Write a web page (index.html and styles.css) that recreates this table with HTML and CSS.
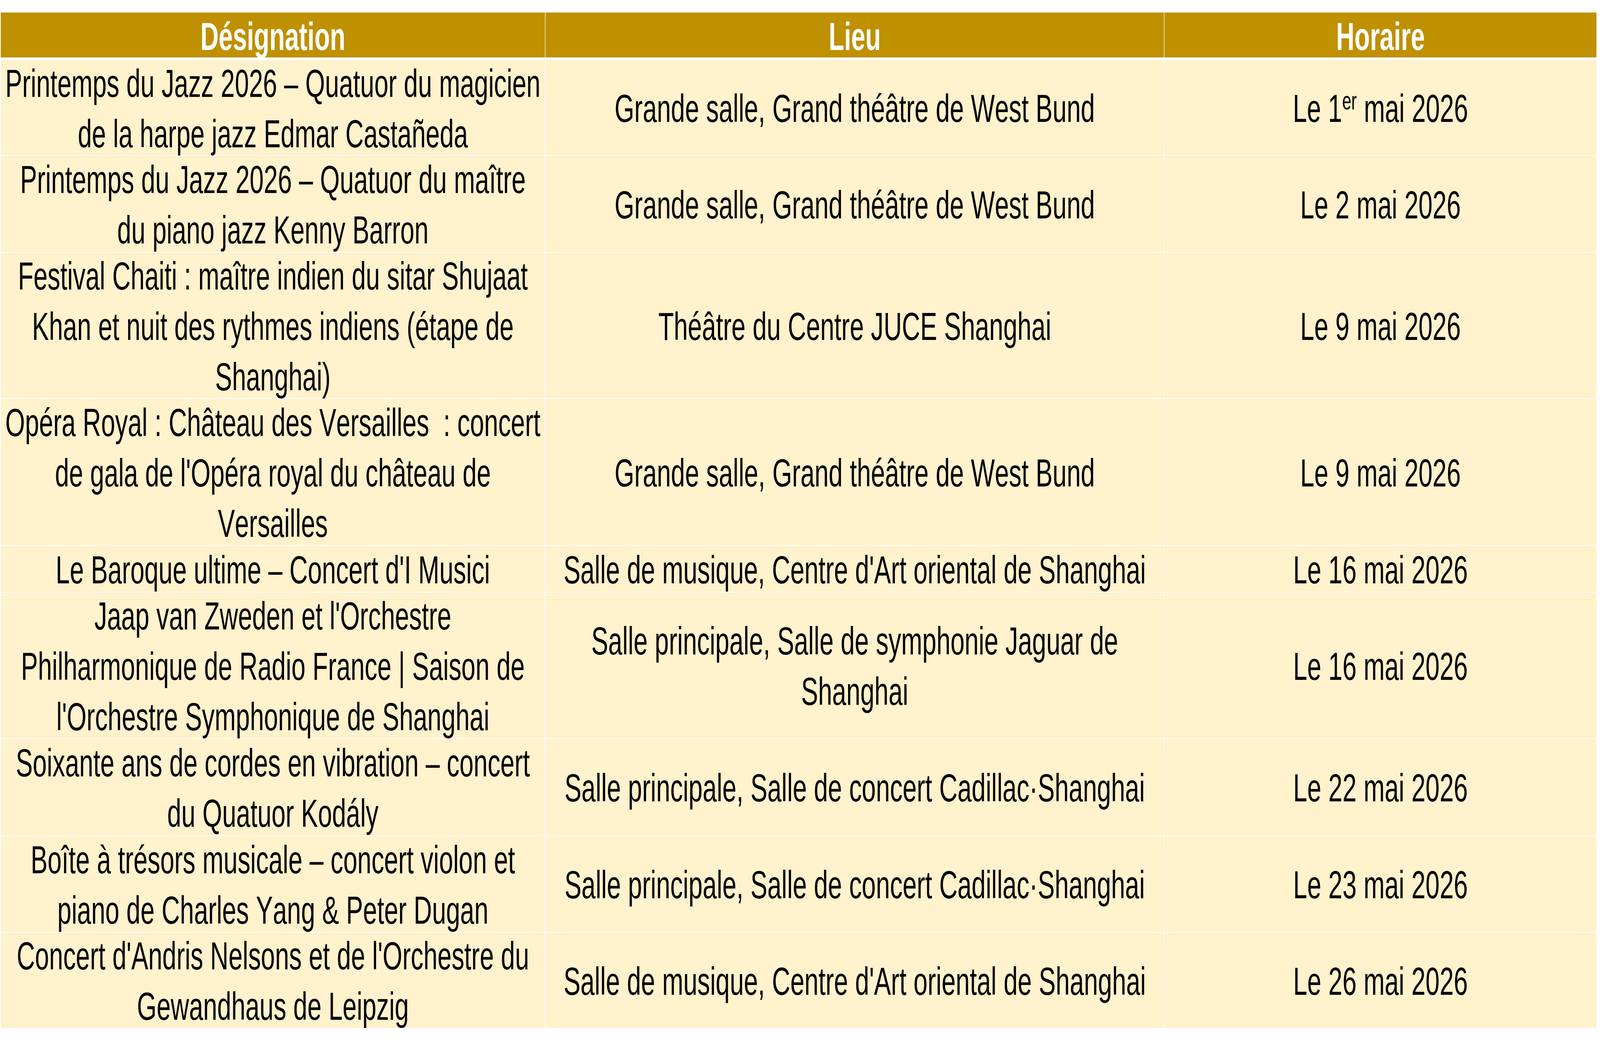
FILE: index.html
```html
<!DOCTYPE html>
<html lang="fr">
<head>
<meta charset="utf-8">
<title>Programme</title>
<link rel="stylesheet" href="styles.css">
</head>
<body>
<div class="frame">
<div class="sheet">
  <div class="head">
    <div class="hcell"><span>Désignation</span></div>
    <div class="hcell"><span>Lieu</span></div>
    <div class="hcell"><span>Horaire</span></div>
  </div>
  <div class="body">
    <div class="cell"><span>Printemps du Jazz 2026 – Quatuor du magicien<br>de la harpe jazz Edmar Castañeda</span></div>
    <div class="cell"><span>Grande salle, Grand théâtre de West Bund</span></div>
    <div class="cell"><span>Le 1<sup>er</sup> mai 2026</span></div>

    <div class="cell"><span>Printemps du Jazz 2026 – Quatuor du maître<br>du piano jazz Kenny Barron</span></div>
    <div class="cell"><span>Grande salle, Grand théâtre de West Bund</span></div>
    <div class="cell"><span>Le 2 mai 2026</span></div>

    <div class="cell"><span>Festival Chaiti : maître indien du sitar Shujaat<br>Khan et nuit des rythmes indiens (étape de<br>Shanghai)</span></div>
    <div class="cell"><span>Théâtre du Centre JUCE Shanghai</span></div>
    <div class="cell"><span>Le 9 mai 2026</span></div>

    <div class="cell"><span>Opéra Royal : Château des Versailles&nbsp; : concert<br>de gala de l'Opéra royal du château de<br>Versailles</span></div>
    <div class="cell"><span>Grande salle, Grand théâtre de West Bund</span></div>
    <div class="cell"><span>Le 9 mai 2026</span></div>

    <div class="cell"><span>Le Baroque ultime – Concert d'I Musici</span></div>
    <div class="cell"><span>Salle de musique, Centre d'Art oriental de Shanghai</span></div>
    <div class="cell"><span>Le 16 mai 2026</span></div>

    <div class="cell"><span>Jaap van Zweden et l'Orchestre<br>Philharmonique de Radio France | Saison de<br>l'Orchestre Symphonique de Shanghai</span></div>
    <div class="cell"><span>Salle principale, Salle de symphonie Jaguar de<br>Shanghai</span></div>
    <div class="cell"><span>Le 16 mai 2026</span></div>

    <div class="cell"><span>Soixante ans de cordes en vibration – concert<br>du Quatuor Kodály</span></div>
    <div class="cell"><span>Salle principale, Salle de concert Cadillac·Shanghai</span></div>
    <div class="cell"><span>Le 22 mai 2026</span></div>

    <div class="cell"><span>Boîte à trésors musicale – concert violon et<br>piano de Charles Yang &amp; Peter Dugan</span></div>
    <div class="cell"><span>Salle principale, Salle de concert Cadillac·Shanghai</span></div>
    <div class="cell"><span>Le 23 mai 2026</span></div>

    <div class="cell"><span>Concert d'Andris Nelsons et de l'Orchestre du<br>Gewandhaus de Leipzig</span></div>
    <div class="cell"><span>Salle de musique, Centre d'Art oriental de Shanghai</span></div>
    <div class="cell"><span>Le 26 mai 2026</span></div>
  </div>
</div>
</div>
</body>
</html>
```
FILE: styles.css
```css
html, body {
  margin: 0;
  padding: 0;
  width: 100%;
  height: 100%;
  background: #ffffff;
  overflow: hidden;
}

/* The visible frame: whatever the browser window is. */
.frame {
  width: 100vw;
  height: 100vh;
  overflow: hidden;
}

/* The sheet is laid out on the 6315 x 2695 reference frame; the browser
   window is only 4096 px wide, so the frame is fitted to it horizontally. */
.sheet {
  width: 6315px;
  box-sizing: border-box;
  padding: 32px 0 0 3px;
  display: flex;
  flex-direction: column;
  gap: 7px;
  font-family: "Liberation Sans", Arial, sans-serif;
  font-size: 100px;
  line-height: 129px;
  font-kerning: none;
  transform: scaleX(0.648614);
  transform-origin: 0 0;
}

.head,
.body {
  display: grid;
  grid-template-columns: 2148px 2441px 1705px;
  column-gap: 2px;
  row-gap: 2px;
}

.head {
  grid-template-rows: 115px;
}

.body {
  grid-template-rows: 243px 246px 372px 374px 118px 372px 247px 245px 244px;
}

.hcell {
  background: #bf9000;
  color: #ffffff;
  font-weight: bold;
  display: flex;
  align-items: center;
  justify-content: center;
  padding-top: 8px;
  box-sizing: border-box;
  white-space: nowrap;
}

.cell {
  background: #fff2cc;
  color: #000000;
  display: flex;
  align-items: center;
  justify-content: center;
  text-align: center;
  padding-top: 4px;
  box-sizing: border-box;
  white-space: nowrap;
}

.cell sup {
  font-size: 65px;
  line-height: 0;
  vertical-align: 32px;
}
```
